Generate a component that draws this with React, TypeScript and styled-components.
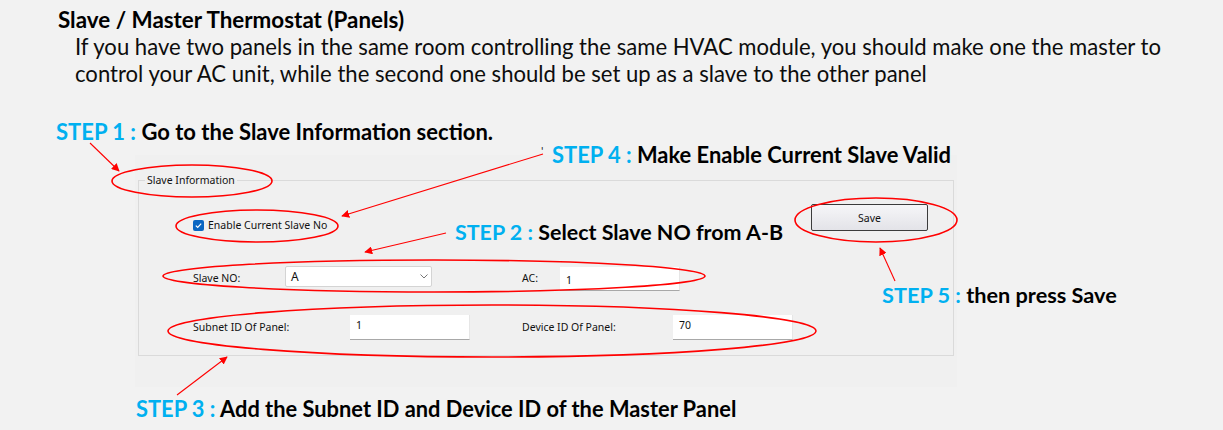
import React from "react";
import styled, { createGlobalStyle } from "styled-components";

const GlobalStyle = createGlobalStyle`
  html, body { margin: 0; padding: 0; background: #f2f2f2; }
  body { font-family: Lato, "Liberation Sans", sans-serif; }
`;

const Slide = styled.div`
  position: relative;
  width: 1223px;
  height: 430px;
  overflow: hidden;
  background: #f2f2f2;
  font-family: Lato, "Liberation Sans", sans-serif;
  color: #000;
`;

const Title = styled.h1`
  margin: 0;
  padding: 7px 0 0 58px;
  font-size: 22.4px;
  line-height: 26px;
  font-weight: 700;
  color: #000;
`;

const Intro = styled.p`
  margin: 0;
  padding-left: 75px;
  font-size: 22.1px;
  line-height: 27px;
  color: #0d0d0d;
  white-space: nowrap;
`;

const StepLine = styled.div<{ $left: number; $top: number; $size: number }>`
  margin: ${(p) => p.$top}px 0 0 ${(p) => p.$left}px;
  font-size: ${(p) => p.$size}px;
  line-height: 24px;
  font-weight: 700;
  white-space: nowrap;
`;

const Callout = styled.div<{ $x: number; $y: number; $size: number }>`
  position: absolute;
  left: ${(p) => p.$x}px;
  top: ${(p) => p.$y}px;
  font-size: ${(p) => p.$size}px;
  line-height: 24px;
  font-weight: 700;
  white-space: nowrap;
`;

const Tag = styled.span`
  color: #00b0f0;
`;

const Tick = styled.span`
  position: absolute;
  left: -11px;
  top: -4px;
  font-size: 12px;
  font-weight: 400;
  color: #333;
`;

const Shot = styled.div`
  margin: 11px 0 0 135px;
  width: 822px;
  height: 232px;
  padding: 25px 3px 0 3px;
  box-sizing: border-box;
  background: #f0f0f0;
  font-family: "Noto Sans", "Open Sans", sans-serif;
  font-size: 10.5px;
  color: #111;
`;

const GroupBox = styled.div`
  position: relative;
  height: 176px;
  box-sizing: border-box;
  border: 1px solid #dadada;
  padding: 23px 25px 0 54px;
  display: flex;
  flex-direction: column;
`;

const Legend = styled.span`
  position: absolute;
  left: 6px;
  top: -9px;
  padding: 0 2px;
  background: #f0f0f0;
  line-height: 16px;
`;

const TopRow = styled.div`
  display: flex;
  justify-content: space-between;
  align-items: flex-start;
  height: 27px;
`;

const CheckLabel = styled.label`
  display: flex;
  align-items: center;
  gap: 4px;
  margin-top: 14px;
  line-height: 14px;
`;

const CheckBox = styled.span`
  display: inline-flex;
  align-items: center;
  justify-content: center;
  width: 11px;
  height: 11px;
  border-radius: 2px;
  background: #0a66c2;
`;

const SaveButton = styled.button`
  width: 117px;
  height: 27px;
  border: 1px solid #3c3c3c;
  border-radius: 2px;
  background: linear-gradient(#f6f6f8, #e3e3e8);
  font-family: inherit;
  font-size: 10.5px;
  color: #111;
  padding: 0;
`;

const FieldRow = styled.div<{ $gap: number }>`
  display: grid;
  grid-template-columns: 329px auto;
  margin-top: ${(p) => p.$gap}px;
`;

const Field = styled.div`
  display: flex;
  align-items: flex-start;
`;

const FieldLabel = styled.span<{ $w: number }>`
  width: ${(p) => p.$w}px;
  flex: none;
  margin-top: 5px;
  line-height: 14px;
`;

const Combo = styled.div`
  width: 147px;
  height: 21px;
  box-sizing: border-box;
  display: flex;
  align-items: center;
  justify-content: space-between;
  padding: 0 3px 0 5px;
  background: #fff;
  border: 1px solid #d4d4d4;
  border-radius: 2px;
  font-size: 12px;
`;

const TextBox = styled.div<{ $h: number; $pt: number; $mt?: number }>`
  width: 120px;
  height: ${(p) => p.$h}px;
  margin-top: ${(p) => p.$mt ?? 0}px;
  box-sizing: border-box;
  padding: ${(p) => p.$pt}px 6px 0 6px;
  background: #fff;
  border-bottom: 1px solid #a8a8a8;
  border-right: 1px solid #e6e6e6;
  line-height: 14px;
`;

const Overlay = styled.svg`
  position: absolute;
  left: 0;
  top: 0;
  pointer-events: none;
`;

const arrows: [number, number, number, number][] = [
  [90, 143, 119, 171],
  [543, 154, 342, 216],
  [446, 233, 365, 252],
  [895, 281, 880, 248],
  [177, 395, 227, 357],
];

const ellipses: [number, number, number, number][] = [
  [192, 181, 80, 16],
  [257, 226, 81, 16],
  [876, 220, 81, 22],
  [434, 276, 271, 16],
  [492, 331, 324, 26],
];

export default function App() {
  return (
    <Slide>
      <GlobalStyle />
      <Title>Slave / Master Thermostat (Panels)</Title>
      <Intro>
        If you have two panels in the same room controlling the same HVAC module, you should make one the master to
        <br />
        control your AC unit, while the second one should be set up as a slave to the other panel
      </Intro>
      <StepLine $left={56} $top={33} $size={22}>
        <Tag>STEP 1 : </Tag>Go to the Slave Information section.
      </StepLine>

      <Shot>
        <GroupBox>
          <Legend>Slave Information</Legend>
          <TopRow>
            <CheckLabel>
              <CheckBox>
                <svg width="9" height="9" viewBox="0 0 9 9">
                  <path d="M1.8 4.6 L3.7 6.4 L7.2 2.6" fill="none" stroke="#fff" strokeWidth="1.2" />
                </svg>
              </CheckBox>
              Enable Current Slave No
            </CheckLabel>
            <SaveButton>Save</SaveButton>
          </TopRow>
          <FieldRow $gap={35}>
            <Field>
              <FieldLabel $w={92}>Slave NO:</FieldLabel>
              <Combo>
                <span>A</span>
                <svg width="8" height="5" viewBox="0 0 8 5">
                  <path d="M0.5 0.5 L4 4 L7.5 0.5" fill="none" stroke="#777" strokeWidth="1" />
                </svg>
              </Combo>
            </Field>
            <Field>
              <FieldLabel $w={38}>AC:</FieldLabel>
              <TextBox $h={24} $pt={6} $mt={1}>1</TextBox>
            </Field>
          </FieldRow>
          <FieldRow $gap={24}>
            <Field>
              <FieldLabel $w={157}>Subnet ID Of Panel:</FieldLabel>
              <TextBox $h={25} $pt={3}>1</TextBox>
            </Field>
            <Field>
              <FieldLabel $w={151}>Device ID Of Panel:</FieldLabel>
              <TextBox $h={25} $pt={3}>70</TextBox>
            </Field>
          </FieldRow>
        </GroupBox>
      </Shot>

      <StepLine $left={136} $top={10} $size={21.85}>
        <Tag>STEP 3 : </Tag>Add the Subnet ID and Device ID of the Master Panel
      </StepLine>

      <Callout $x={552} $y={143} $size={21.9}>
        <Tick>'</Tick>
        <Tag>STEP 4 : </Tag>Make Enable Current Slave Valid
      </Callout>
      <Callout $x={455} $y={220} $size={21.45}>
        <Tag>STEP 2 : </Tag>Select Slave NO from A-B
      </Callout>
      <Callout $x={882} $y={283} $size={21.7}>
        <Tag>STEP 5 : </Tag>then press Save
      </Callout>

      <Overlay width="1223" height="430" viewBox="0 0 1223 430">
        <defs>
          <marker id="head" viewBox="0 0 10 10" refX="9" refY="5" markerWidth="8" markerHeight="8" orient="auto" markerUnits="userSpaceOnUse">
            <path d="M0 0 L10 5 L0 10 Z" fill="#ff0000" />
          </marker>
        </defs>
        {ellipses.map(([cx, cy, rx, ry], i) => (
          <ellipse key={i} cx={cx} cy={cy} rx={rx} ry={ry} fill="none" stroke="#ff0000" strokeWidth="1.6" />
        ))}
        {arrows.map(([x1, y1, x2, y2], i) => (
          <line key={i} x1={x1} y1={y1} x2={x2} y2={y2} stroke="#ff0000" strokeWidth="1.1" markerEnd="url(#head)" />
        ))}
      </Overlay>
    </Slide>
  );
}
